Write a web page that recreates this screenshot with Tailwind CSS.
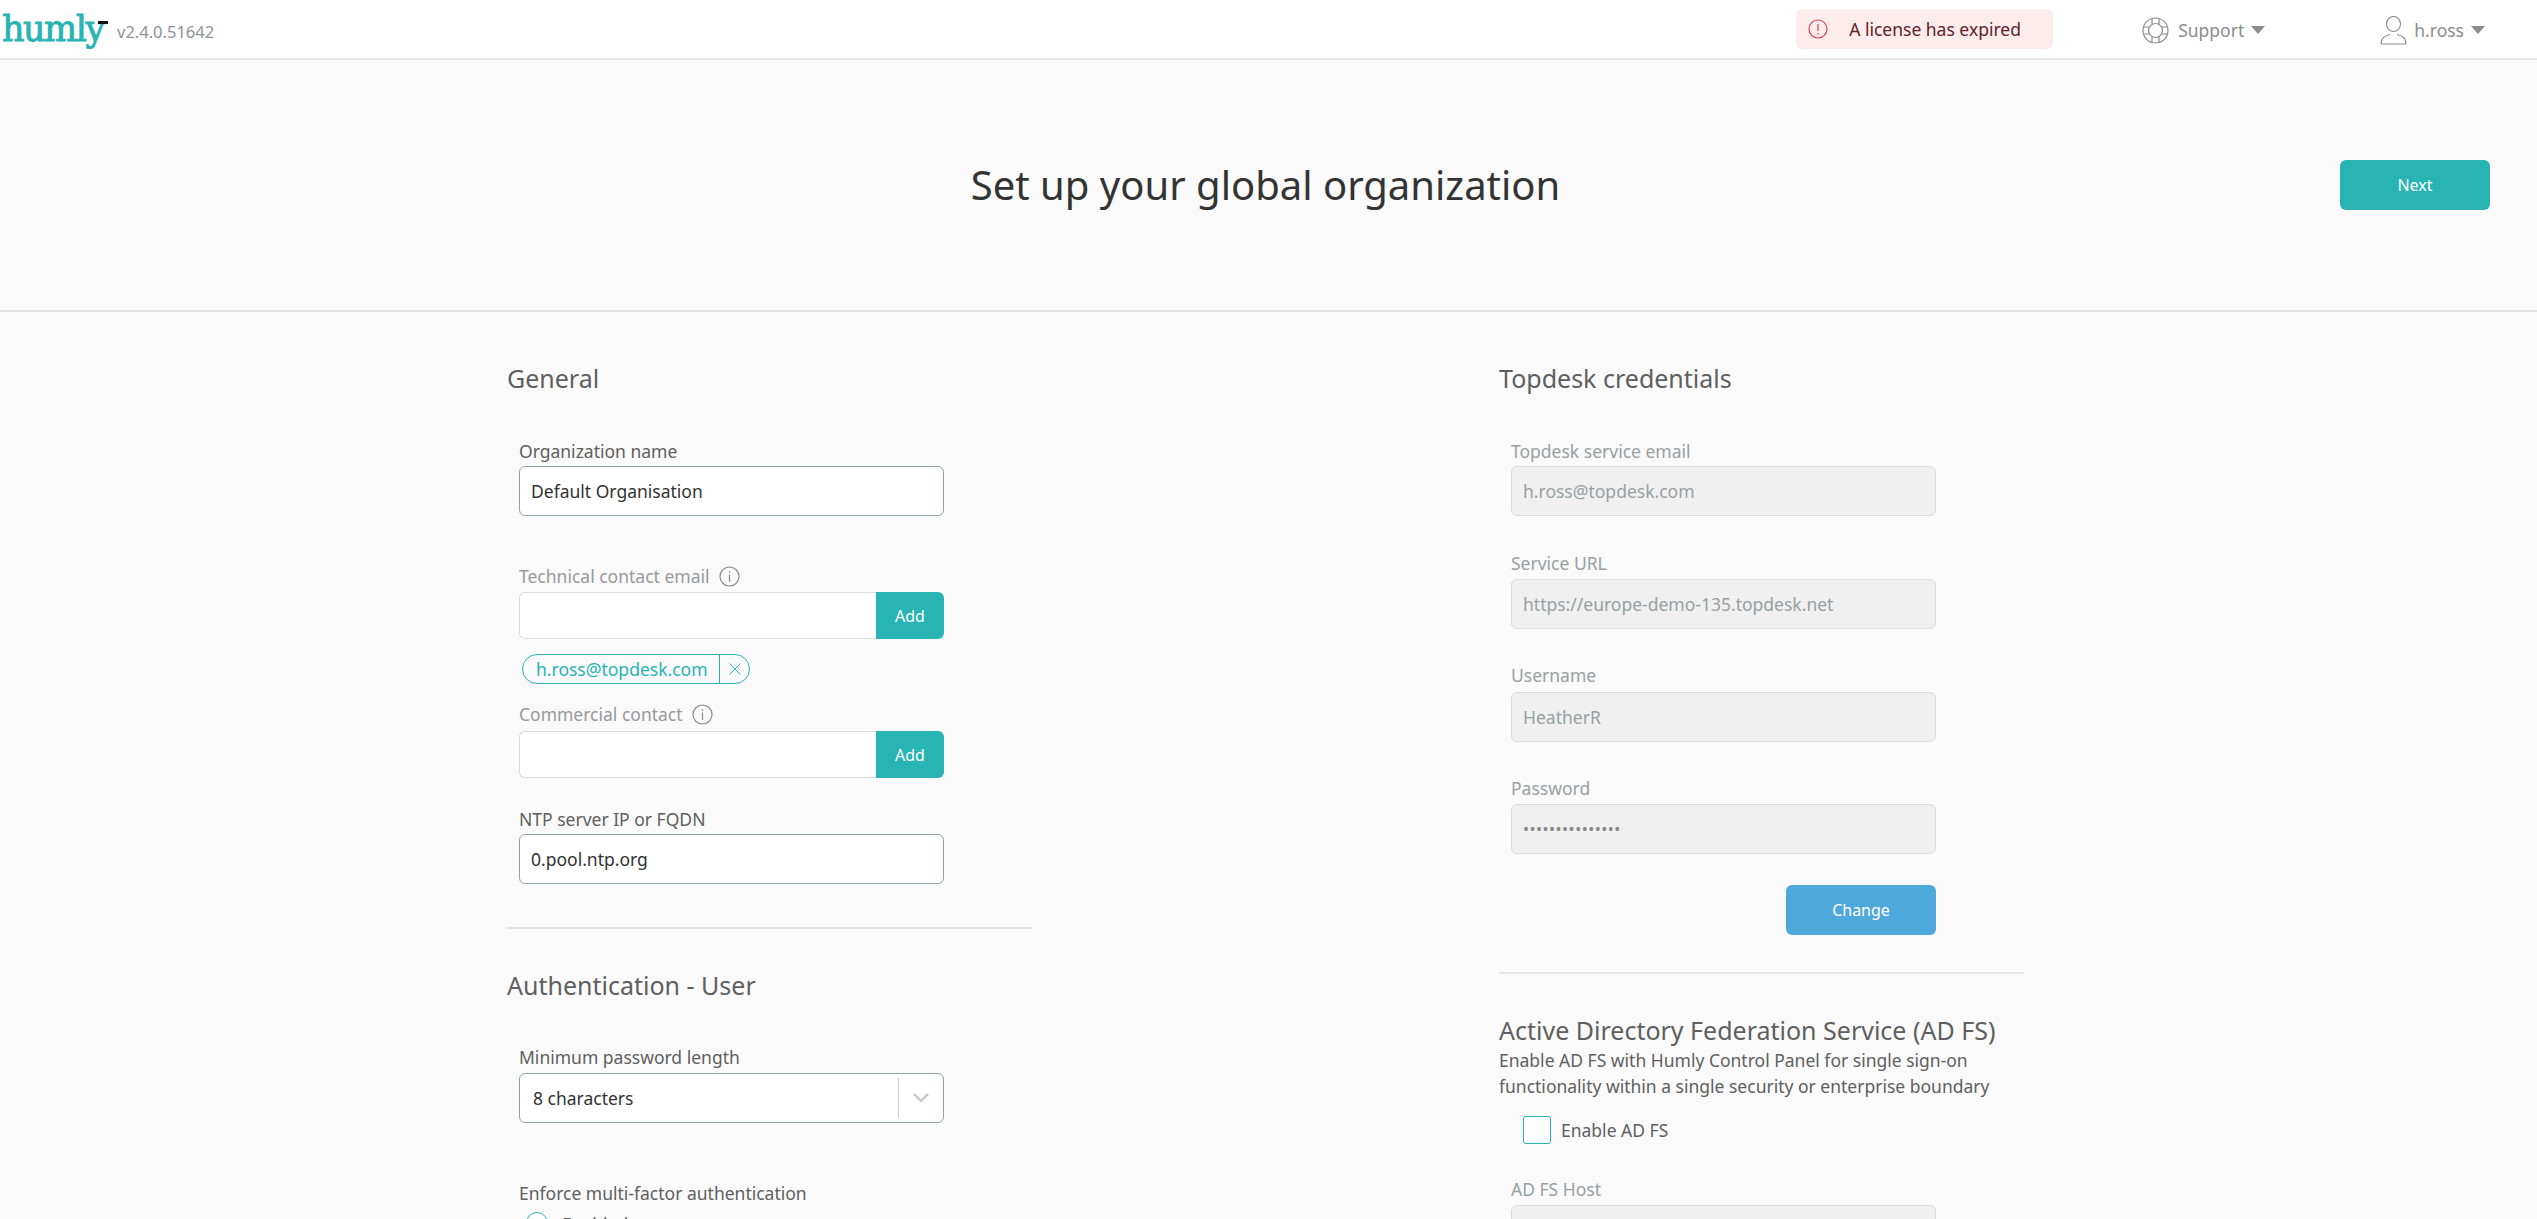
<!DOCTYPE html>
<html lang="en">
<head>
    <meta charset="UTF-8">
    <title>Humly Control Panel</title>
    <script src="https://cdn.jsdelivr.net/npm/@tailwindcss/browser@4"></script>
</head>
<body class="h-[1219px] overflow-hidden bg-[#fafafa] font-['Noto_Sans',sans-serif] text-[17.5px] text-[#5f5f5f]">
    <!-- top bar -->
    <header class="flex h-[60px] items-center border-b-2 border-[#e3e3e3] bg-white">
        <div class="relative ml-[2px] w-[115px] font-['DejaVu_Serif',serif] text-[35px] leading-[60px] tracking-[-1.5px] text-[#27b4b3] [-webkit-text-stroke:0.9px_#27b4b3]">humly<span class="absolute left-[96px] top-[22px] h-[3px] w-[10px] bg-[#111]"></span></div>
        <span class="mt-[6px] text-[16.5px] text-[#8e9299]">v2.4.0.51642</span>
        <div class="ml-[1582px] flex h-[40px] w-[257px] items-center rounded-[6px] bg-[#fdecec] pl-[12px] text-[#5f2228]">
            <svg class="h-[20px] w-[20px]" viewBox="0 0 20 20" fill="none" stroke="#d9434e" stroke-width="1.2"><circle cx="10" cy="10" r="9"/><path d="M10 5v7M10 14v1.4"/></svg>
            <span class="ml-[21px]">A license has expired</span>
        </div>
        <div class="ml-[89px] mt-[2px] flex items-center text-[#8c8c8c]">
            <svg class="h-[27px] w-[27px]" viewBox="0 0 27 27" fill="none" stroke="#8c8c8c" stroke-width="1.2"><circle cx="13.5" cy="13.5" r="12.5"/><circle cx="13.5" cy="13.5" r="7"/><path d="M10 1.500V7.500M17 1.500V7.500M10 19.500V25.500M17 19.500V25.500M1.500 10H7.500M1.500 17H7.500M19.500 10H25.500M19.500 17H25.500"/></svg>
            <span class="ml-[9px]">Support</span>
            <span class="ml-[7px] h-0 w-0 border-x-[7px] border-t-[8px] border-x-transparent border-t-[#8c8c8c]"></span>
        </div>
        <div class="ml-[115px] mt-[2px] flex items-center text-[#8c8c8c]">
            <svg class="h-[29px] w-[27px]" viewBox="0 0 27 29" fill="none" stroke="#8c8c8c" stroke-width="1.2"><ellipse cx="13.5" cy="8" rx="7" ry="7.500"/><path d="M1 28c0-6 3-8 9-9.500M26 28c0-6-3-8-9-9.500M1 28h25"/></svg>
            <span class="ml-[7px]">h.ross</span>
            <span class="ml-[7px] h-0 w-0 border-x-[7px] border-t-[8px] border-x-transparent border-t-[#8c8c8c]"></span>
        </div>
    </header>

    <!-- title band -->
    <section class="relative flex h-[252px] items-center justify-center border-b-2 border-[#dedede]">
        <h1 class="mr-[6px] text-[40px] text-[#333]">Set up your global organization</h1>
        <button class="absolute right-[47px] top-[100px] h-[50px] w-[150px] rounded-[6px] bg-[#27b4b3] text-[16px] text-white">Next</button>
    </section>

    <main class="ml-[507px] grid w-[1517px] grid-cols-[525px_525px] justify-between">
        <!-- left column -->
        <div>
            <h2 class="mt-[48px] text-[25px] leading-[36px]">General</h2>
            <div class="mx-[12px] mt-[43px] w-[425px]">
                <label class="block leading-[24px]">Organization name</label>
                <div class="mt-[3px] flex h-[50px] items-center rounded-[6px] border border-[#8fa3a6] bg-white px-[11px] text-[#333]">Default Organisation</div>

                <label class="mt-[48px] flex items-center leading-[24px] text-[#97999c]">Technical contact email
                    <svg class="ml-[9px] h-[21px] w-[21px]" viewBox="0 0 21 21" fill="none" stroke="#8c8c8c" stroke-width="1.2"><circle cx="10.5" cy="10.500" r="9.500"/><path d="M10.500 8.500v7.500M10.500 5v1.800"/></svg>
                </label>
                <div class="mt-[4px] flex h-[47px]">
                    <div class="flex-1 rounded-l-[6px] border border-r-0 border-[#dcdcdc] bg-white"></div>
                    <button class="w-[68px] rounded-r-[6px] bg-[#27b4b3] text-[16px] text-white">Add</button>
                </div>
                <div class="ml-[3px] mt-[15px] flex h-[30px] w-[228px] items-center rounded-full border border-[#27b4b3] text-[#27b4b3]">
                    <span class="w-[196px] pl-[13px] leading-[24px]">h.ross@topdesk.com</span>
                    <span class="flex h-full flex-1 items-center justify-center border-l border-[#27b4b3]">
                        <svg class="h-[12px] w-[12px]" viewBox="0 0 12 12" stroke="#27b4b3"><path d="M.5.5l11 11M11.500.5l-11 11"/></svg>
                    </span>
                </div>

                <label class="mt-[18px] flex items-center leading-[24px] text-[#97999c]">Commercial contact
                    <svg class="ml-[9px] h-[21px] w-[21px]" viewBox="0 0 21 21" fill="none" stroke="#8c8c8c" stroke-width="1.2"><circle cx="10.5" cy="10.500" r="9.500"/><path d="M10.500 8.500v7.500M10.500 5v1.800"/></svg>
                </label>
                <div class="mt-[5px] flex h-[47px]">
                    <div class="flex-1 rounded-l-[6px] border border-r-0 border-[#dcdcdc] bg-white"></div>
                    <button class="w-[68px] rounded-r-[6px] bg-[#27b4b3] text-[16px] text-white">Add</button>
                </div>

                <label class="mt-[29px] block leading-[24px]">NTP server IP or FQDN</label>
                <div class="mt-[3px] flex h-[50px] items-center rounded-[6px] border border-[#8fa3a6] bg-white px-[11px] text-[#333]">0.pool.ntp.org</div>
            </div>
            <div class="mt-[43px] border-t-2 border-[#e3e3e3]"></div>
            <h2 class="mt-[38px] text-[25px] leading-[36px]">Authentication - User</h2>
            <div class="mx-[12px] mt-[42px] w-[425px]">
                <label class="block leading-[24px]">Minimum password length</label>
                <div class="mt-[4px] flex h-[50px] items-center rounded-[6px] border border-[#8fa3a6] bg-white pl-[13px] text-[#333]">
                    <span class="flex-1">8 characters</span>
                    <span class="h-[40px] w-px bg-[#cfcfcf]"></span>
                    <svg class="mx-[14px] h-[12px] w-[16px]" viewBox="0 0 16 12" fill="none" stroke="#c9c9c9" stroke-width="2.500"><path d="M1 2l7 7 7-7"/></svg>
                </div>
                <label class="mt-[58px] block leading-[24px]">Enforce multi-factor authentication</label>
                <div class="ml-[7px] mt-[7px] flex items-start gap-[14px]">
                    <span class="h-[22px] w-[22px] rounded-full border border-[#27b4b3] bg-white"></span>
                    <span class="leading-[24px]">Enabled</span>
                </div>
            </div>
        </div>

        <!-- right column -->
        <div>
            <h2 class="mt-[48px] text-[25px] leading-[36px]">Topdesk credentials</h2>
            <div class="mx-[12px] mt-[43px] w-[425px] text-[#97a0a3]">
                <label class="block leading-[24px]">Topdesk service email</label>
                <div class="mt-[3px] flex h-[50px] items-center rounded-[6px] border border-[#dcdcdc] bg-[#f0f0f0] px-[11px]">h.ross@topdesk.com</div>
                <label class="mt-[35px] block leading-[24px]">Service URL</label>
                <div class="mt-[4px] flex h-[50px] items-center rounded-[6px] border border-[#dcdcdc] bg-[#f0f0f0] px-[11px]">https://europe-demo-135.topdesk.net</div>
                <label class="mt-[34px] block leading-[24px]">Username</label>
                <div class="mt-[5px] flex h-[50px] items-center rounded-[6px] border border-[#dcdcdc] bg-[#f0f0f0] px-[11px]">HeatherR</div>
                <label class="mt-[34px] block leading-[24px]">Password</label>
                <div class="mt-[4px] flex h-[50px] items-center rounded-[6px] border border-[#dcdcdc] bg-[#f0f0f0] px-[11px] text-[16px] tracking-[0.5px] text-[#888]">•••••••••••••••</div>
                <div class="mt-[31px] flex justify-end">
                    <button class="h-[50px] w-[150px] rounded-[6px] bg-[#4fa8dc] text-[16px] text-white">Change</button>
                </div>
            </div>
            <div class="mt-[37px] border-t-2 border-[#e3e3e3]"></div>
            <h2 class="mt-[38px] text-[25px] leading-[36px]">Active Directory Federation Service (AD FS)</h2>
            <p class="-mt-px leading-[26px]">Enable AD FS with Humly Control Panel for single sign-on<br>functionality within a single security or enterprise boundary</p>
            <div class="ml-[24px] mt-[17px] flex items-center gap-[10px]">
                <span class="h-[28px] w-[28px] rounded-[3px] border border-[#27b4b3] bg-white"></span>
                <span>Enable AD FS</span>
            </div>
            <div class="mx-[12px] mt-[33px] w-[425px] text-[#97a0a3]">
                <label class="block leading-[24px]">AD FS Host</label>
                <div class="mt-[4px] h-[50px] rounded-[6px] border border-[#dcdcdc] bg-[#f0f0f0]"></div>
            </div>
        </div>
    </main>
</body>
</html>
